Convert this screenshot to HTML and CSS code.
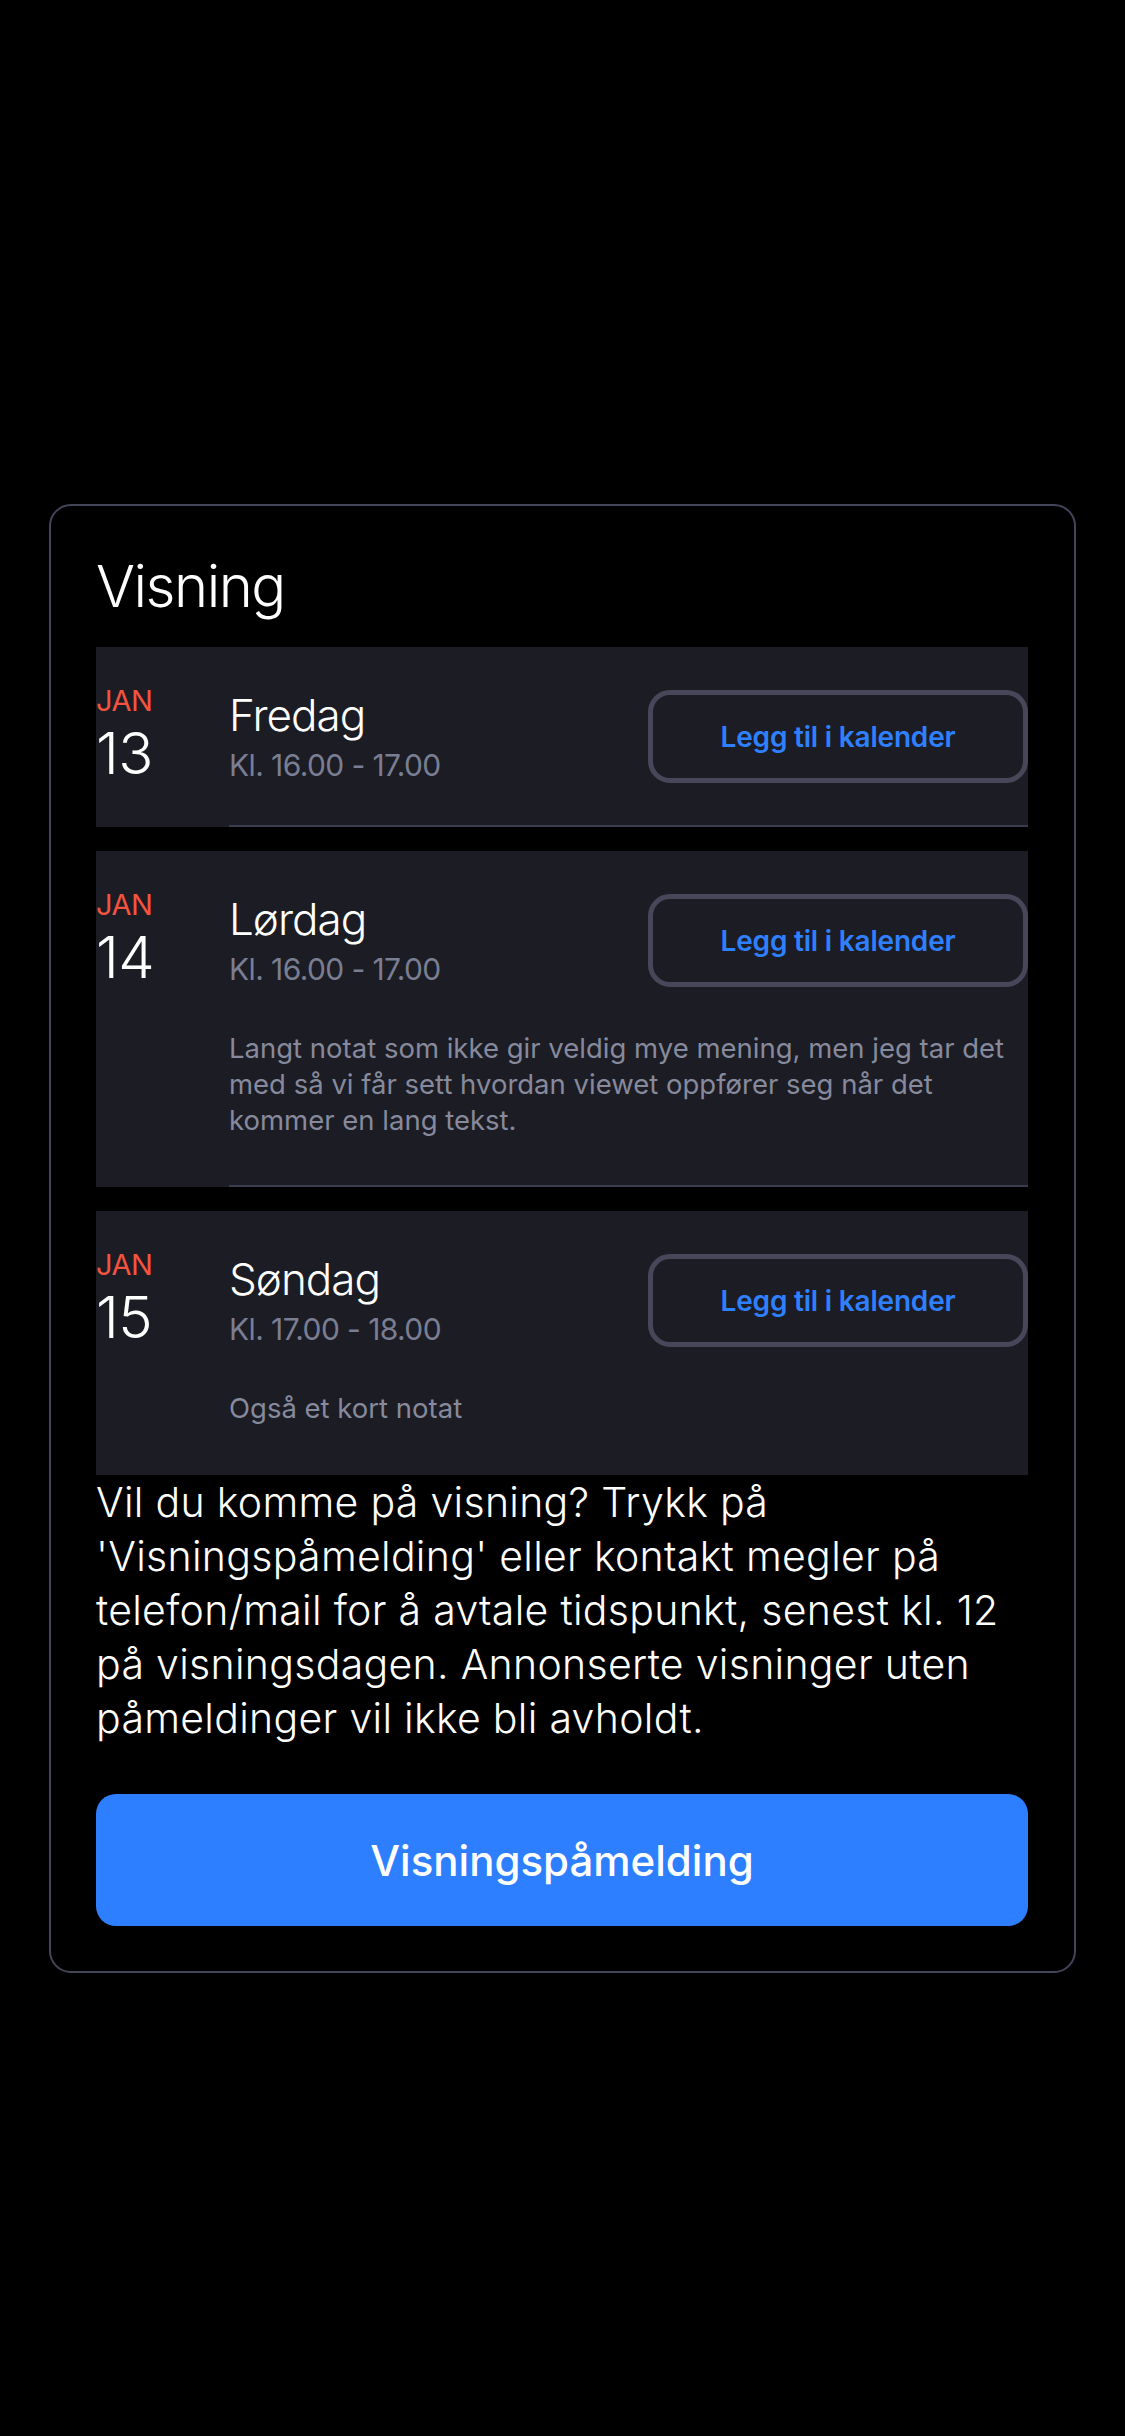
FILE: index.html
```html
<!DOCTYPE html>
<html lang="no">
<head>
<meta charset="utf-8">
<title>Visning</title>
<link rel="stylesheet" href="styles.css">
</head>
<body>
<main class="page">
  <section class="card">
    <h1 class="title">Visning</h1>

    <div class="viewing">
      <div class="date"><span class="month">JAN</span><span class="day-num">13</span></div>
      <div class="main">
        <div class="head">
          <div class="when">
            <div class="weekday">Fredag</div>
            <div class="time">Kl. 16.00 - 17.00</div>
          </div>
          <button class="cal-btn">Legg til i kalender</button>
        </div>
      </div>
    </div>

    <div class="viewing">
      <div class="date"><span class="month">JAN</span><span class="day-num">14</span></div>
      <div class="main">
        <div class="head">
          <div class="when">
            <div class="weekday">Lørdag</div>
            <div class="time">Kl. 16.00 - 17.00</div>
          </div>
          <button class="cal-btn">Legg til i kalender</button>
        </div>
        <p class="note">Langt notat som ikke gir veldig mye mening, men jeg tar det med så vi får sett hvordan viewet oppfører seg når det kommer en lang tekst.</p>
      </div>
    </div>

    <div class="viewing">
      <div class="date"><span class="month">JAN</span><span class="day-num">15</span></div>
      <div class="main">
        <div class="head">
          <div class="when">
            <div class="weekday">Søndag</div>
            <div class="time">Kl. 17.00 - 18.00</div>
          </div>
          <button class="cal-btn">Legg til i kalender</button>
        </div>
        <p class="note">Også et kort notat</p>
      </div>
    </div>

    <p class="info">Vil du komme på visning? Trykk på 'Visningspåmelding' eller kontakt megler på telefon/mail for å avtale tidspunkt, senest kl. 12 på visningsdagen. Annonserte visninger uten påmeldinger vil ikke bli avholdt.</p>

    <button class="signup">Visningspåmelding</button>
  </section>
</main>
</body>
</html>
```
FILE: styles.css
```css
* { box-sizing: border-box; }

html, body {
  margin: 0;
  padding: 0;
  background: #000;
}

body {
  font-family: Inter, "Noto Sans", sans-serif;
  color: #fff;
  min-height: 2436px;
}

.page {
  padding: 504px 49px 0;
}

.card {
  border: 2px solid #45455a;
  border-radius: 22px;
  padding: 45px 46px 45px 45px;
}

.title {
  margin: 0 0 26px;
  font-size: 58px;
  line-height: 70px;
  font-weight: 300;
  letter-spacing: -1.5px;
}

.viewing {
  display: grid;
  grid-template-columns: 133px 1fr;
  align-items: start;
  background: #1c1c24;
  padding-top: 43px;
}

.viewing + .viewing {
  margin-top: 24px;
}

.date {
  display: flex;
  flex-direction: column;
}

.month {
  font-size: 29px;
  line-height: 22px;
  font-weight: 400;
  color: #f4533f;
  letter-spacing: -0.5px;
}

.day-num {
  margin-top: 11px;
  font-size: 58px;
  line-height: 60px;
  font-weight: 300;
  letter-spacing: -0.5px;
}

.main {
  padding-bottom: 42px;
  border-bottom: 2px solid #3c3c4f;
}

.viewing:last-of-type .main {
  border-bottom: none;
  padding-bottom: 44px;
}

.head {
  display: flex;
  justify-content: space-between;
  align-items: flex-start;
}

.weekday {
  font-size: 44px;
  line-height: 50px;
  font-weight: 300;
  letter-spacing: -1px;
}

.time {
  margin-top: 7px;
  font-size: 30px;
  line-height: 36px;
  font-weight: 400;
  color: #7a7e92;
  letter-spacing: -0.6px;
}

.cal-btn {
  width: 380px;
  height: 93px;
  border: 5px solid #474759;
  border-radius: 22px;
  background: transparent;
  color: #2f80ff;
  font-family: Inter, sans-serif;
  font-size: 28px;
  font-weight: 600;
  letter-spacing: -0.2px;
  padding: 0;
}

.note {
  margin: 43px 20px 5px 0;
  font-size: 27.5px;
  line-height: 36px;
  font-weight: 400;
  color: #868a9c;
  letter-spacing: 0;
}

.info {
  margin: 0;
  font-size: 41px;
  line-height: 54px;
  font-weight: 300;
  letter-spacing: 0.3px;
}

.signup {
  display: block;
  width: 100%;
  height: 132px;
  margin-top: 49px;
  border: none;
  border-radius: 20px;
  background: #2e7fff;
  color: #fff;
  font-family: Inter, sans-serif;
  font-size: 42px;
  font-weight: 500;
  letter-spacing: 0;
}
```
